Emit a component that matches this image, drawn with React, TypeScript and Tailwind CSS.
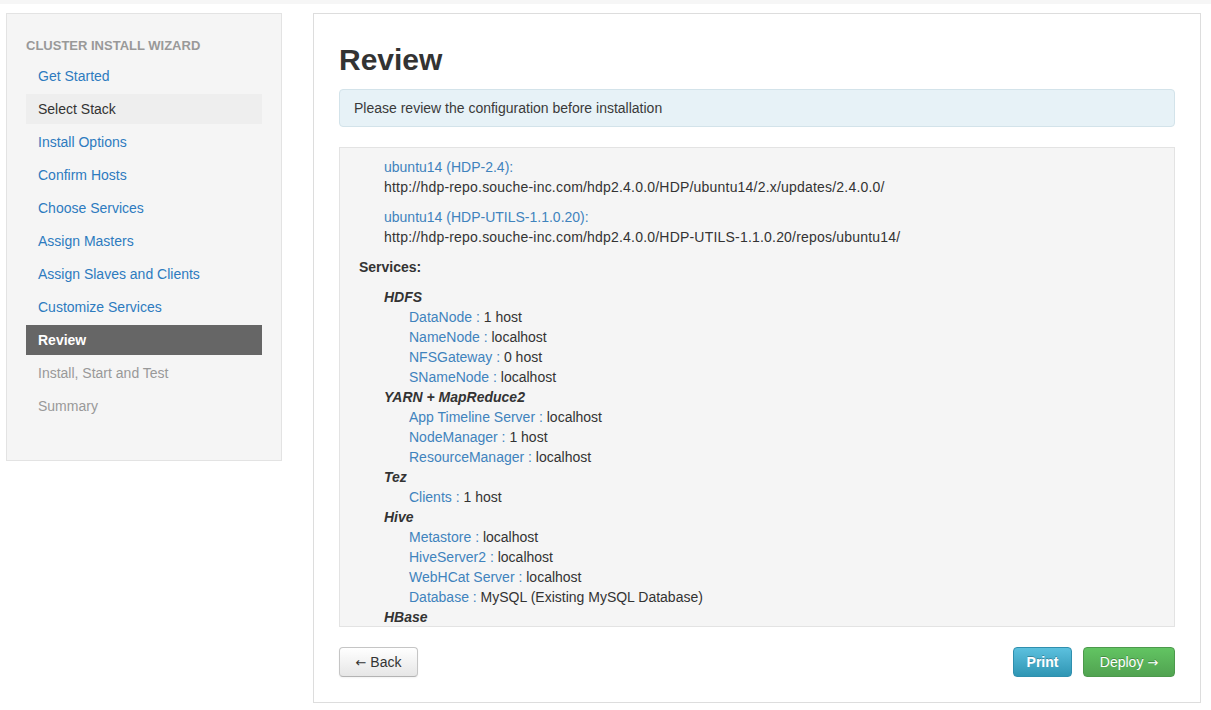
import React from "react";

const steps: { label: string; state: "link" | "hover" | "active" | "disabled" }[] = [
  { label: "Get Started", state: "link" },
  { label: "Select Stack", state: "hover" },
  { label: "Install Options", state: "link" },
  { label: "Confirm Hosts", state: "link" },
  { label: "Choose Services", state: "link" },
  { label: "Assign Masters", state: "link" },
  { label: "Assign Slaves and Clients", state: "link" },
  { label: "Customize Services", state: "link" },
  { label: "Review", state: "active" },
  { label: "Install, Start and Test", state: "disabled" },
  { label: "Summary", state: "disabled" },
];

const repos = [
  {
    name: "ubuntu14 (HDP-2.4):",
    url: "http://hdp-repo.souche-inc.com/hdp2.4.0.0/HDP/ubuntu14/2.x/updates/2.4.0.0/",
  },
  {
    name: "ubuntu14 (HDP-UTILS-1.1.0.20):",
    url: "http://hdp-repo.souche-inc.com/hdp2.4.0.0/HDP-UTILS-1.1.0.20/repos/ubuntu14/",
  },
];

// only what fits in the scroll box is listed
const services: { name: string; components: [string, string][] }[] = [
  {
    name: "HDFS",
    components: [
      ["DataNode", "1 host"],
      ["NameNode", "localhost"],
      ["NFSGateway", "0 host"],
      ["SNameNode", "localhost"],
    ],
  },
  {
    name: "YARN + MapReduce2",
    components: [
      ["App Timeline Server", "localhost"],
      ["NodeManager", "1 host"],
      ["ResourceManager", "localhost"],
    ],
  },
  { name: "Tez", components: [["Clients", "1 host"]] },
  {
    name: "Hive",
    components: [
      ["Metastore", "localhost"],
      ["HiveServer2", "localhost"],
      ["WebHCat Server", "localhost"],
      ["Database", "MySQL (Existing MySQL Database)"],
    ],
  },
  { name: "HBase", components: [] },
];

function stepClass(state: string) {
  if (state === "active") return "bg-[#666666] text-white font-bold";
  if (state === "hover") return "bg-[#eeeeee] text-[#333333]";
  if (state === "disabled") return "text-[#999999]";
  return "text-[#2d7bbf]";
}

export default function App() {
  return (
    <div className="min-h-[710px] bg-white text-[14px] text-[#333333] font-['Liberation_Sans',Arial,sans-serif]">
      <div className="h-[4px] bg-[#f6f6f6]" />
      <div className="flex items-start gap-[31px] pt-[9px] pl-[6px] pr-[10px]">
        {/* sidebar */}
        <div className="w-[276px] shrink-0 border border-[#e3e3e3] bg-[#f5f5f5] px-[19px] pt-[22px] pb-[39px]">
          <div className="mb-[5px] h-[20px] text-[13px] font-bold uppercase leading-[20px] text-[#999999]">
            Cluster Install Wizard
          </div>
          <ul className="flex flex-col gap-[3px]">
            {steps.map((s) => (
              <li
                key={s.label}
                className={`h-[30px] px-[12px] leading-[30px] ${stepClass(s.state)}`}
              >
                {s.label}
              </li>
            ))}
          </ul>
        </div>

        {/* main */}
        <div className="flex-1 border border-[#dddddd] bg-white px-[25px] pt-[26px] pb-[25px]">
          <h2 className="mb-[9px] h-[40px] text-[30px] font-bold leading-[40px] text-[#333333]">Review</h2>
          <div className="rounded-[4px] border border-[#d3e3ea] bg-[#e7f2f7] px-[14px] py-[8px] leading-[20px] text-[#3a3a3a]">
            Please review the configuration before installation
          </div>

          <div className="mt-[20px] h-[480px] overflow-hidden border border-[#e3e3e3] bg-[#f5f5f5] pl-[19px] pt-[9px]">
            <div className="pl-[25px]">
              {repos.map((r) => (
                <div key={r.name} className="mb-[10px] leading-[20px]">
                  <div className="text-[#3f83bd]">{r.name}</div>
                  <div className="tracking-[0.2px]">{r.url}</div>
                </div>
              ))}
            </div>
            <div className="font-bold leading-[20px]">Services:</div>
            <div className="mt-[10px] pl-[25px] leading-[20px]">
              {services.map((svc) => (
                <div key={svc.name}>
                  <div className="font-bold italic">{svc.name}</div>
                  <div className="pl-[25px]">
                    {svc.components.map(([c, v]) => (
                      <div key={c}>
                        <span className="text-[#3f83bd]">{c} :</span> {v}
                      </div>
                    ))}
                  </div>
                </div>
              ))}
            </div>
          </div>

          <div className="mt-[20px] flex items-center">
            <button className="h-[30px] w-[79px] rounded-[4px] border border-[#c5c5c5] border-b-[#b3b3b3] bg-gradient-to-b from-white to-[#e6e6e6] text-[14px] text-[#333333] shadow-[inset_0_1px_0_rgba(255,255,255,0.2),0_1px_2px_rgba(0,0,0,0.05)]">
              <span className="font-['DejaVu_Sans',sans-serif] text-[13px]">←</span> Back
            </button>
            <div className="ml-auto flex gap-[11px]">
              <button className="h-[30px] w-[59px] rounded-[4px] border border-[#2f8fae] bg-gradient-to-b from-[#5bc0de] to-[#2f96b4] text-[14px] font-bold text-white [text-shadow:0_-1px_0_rgba(0,0,0,0.25)]">
                Print
              </button>
              <button className="h-[30px] w-[92px] rounded-[4px] border border-[#4c994c] bg-gradient-to-b from-[#62c462] to-[#51a351] text-[14px] text-white [text-shadow:0_-1px_0_rgba(0,0,0,0.25)]">
                Deploy <span className="font-['DejaVu_Sans',sans-serif] text-[13px]">→</span>
              </button>
            </div>
          </div>
        </div>
      </div>
    </div>
  );
}
